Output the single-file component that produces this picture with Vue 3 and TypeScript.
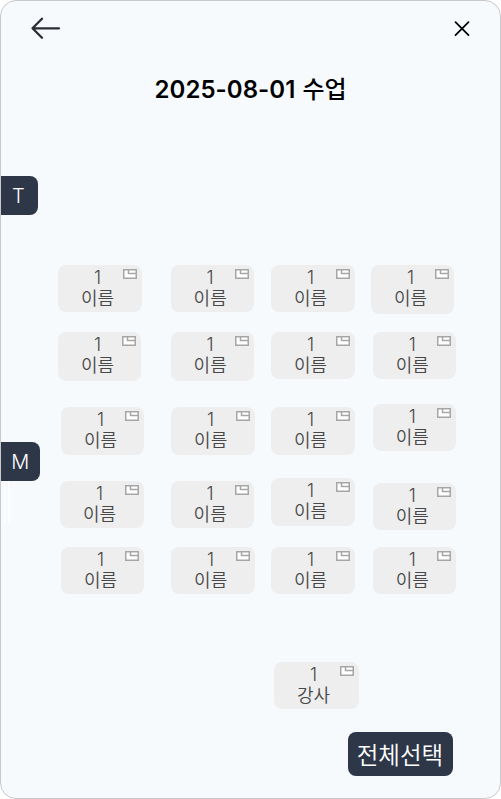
<script setup lang="ts">
interface Seat {
  gap: number
  left: number
  width: number
  height: number
  label: number
  icon: number
}

// gap: distance from the seat above; left: distance from the column edge;
// label / icon: horizontal insets of the caption and the memo icon
const seat = (gap: number, left: number, width: number, height: number, label: number, icon: number): Seat => ({
  gap, left, width, height, label, icon,
})

const columns: Seat[][] = [
  [
    seat(0, 0, 84, 47, 23, 65),
    seat(20, 0, 83, 49, 23, 64),
    seat(26, 3, 83, 47.5, 23, 64),
    seat(26, 1.5, 84.5, 47, 23.5, 65.5),
    seat(19, 3, 83, 47, 23, 64),
  ],
  [
    seat(0, 0, 83, 47, 23, 64.5),
    seat(20, 0, 83, 49, 23, 64.5),
    seat(26, 0, 84.5, 47.5, 23.5, 65.5),
    seat(26, 0, 83, 47, 23, 64.5),
    seat(19, 0, 84.5, 47, 23.5, 65.5),
  ],
  [
    seat(0, 0, 84.3, 47, 23, 65.3),
    seat(20, 0, 84.3, 47, 23, 65.3),
    seat(28, 0, 84.3, 47.5, 23, 65.3),
    seat(23, 0, 84.3, 48, 23, 65.3),
    seat(21, 0, 84.3, 47, 23, 65.3),
  ],
  [
    seat(0, 0, 83, 48.5, 23, 64.5),
    seat(18.5, 1.7, 83, 47, 23, 64.3),
    seat(25, 1.7, 83, 47, 23, 64.3),
    seat(31.7, 1.7, 83, 47, 23, 64.3),
    seat(17.3, 1.7, 83, 47, 23, 64.3),
  ],
]

const seatStyle = (s: Seat) => ({
  marginTop: `${s.gap}px`,
  marginLeft: `${s.left}px`,
  width: `${s.width}px`,
  height: `${s.height}px`,
  paddingLeft: `${s.label}px`,
})
const memoStyle = (s: Seat) => ({ left: `${s.icon}px` })
</script>

<template>
  <main class="screen">
    <header class="bar">
      <button class="icon-button" aria-label="뒤로">
        <svg width="31" height="24" viewBox="0 0 31 24">
          <path d="M29 12.3H2.5M12 2.8L2.5 12.3l9.5 9.5" fill="none" stroke="#2b2e34" stroke-width="2.3" stroke-linecap="round" stroke-linejoin="round" />
        </svg>
      </button>
      <button class="icon-button" aria-label="닫기">
        <svg width="16" height="16" viewBox="0 0 16 16">
          <path d="M1.5 2.1l13 13M14.5 2.1l-13 13" fill="none" stroke="#000" stroke-width="1.7" stroke-linecap="round" />
        </svg>
      </button>
    </header>
    <h1 class="title">2025-08-01 <span class="title-word">수업</span></h1>

    <div class="room">
      <aside class="side">
        <div class="tab tab-t">T</div>
        <div class="tab tab-m">M</div>
        <div class="rail"></div>
      </aside>
      <div v-for="(column, c) in columns" :key="c" class="column">
        <div v-for="(s, r) in column" :key="r" class="seat" :style="seatStyle(s)">
          <span class="number">1</span>
          <span class="name">이름</span>
          <svg class="memo" :style="memoStyle(s)" width="14" height="10" viewBox="0 0 14 10">
            <path d="M.75.75h12.5v8.5H.75z" fill="#fff" stroke="#a6a6a6" stroke-width="1.5" />
            <path d="M5.5 1v3.4h8" fill="none" stroke="#a6a6a6" stroke-width="1.5" />
          </svg>
        </div>
      </div>
    </div>

    <div class="seat teacher">
      <span class="number">1</span>
      <span class="name">강사</span>
      <svg class="memo" width="14" height="10" viewBox="0 0 14 10">
        <path d="M.75.75h12.5v8.5H.75z" fill="#fff" stroke="#a6a6a6" stroke-width="1.5" />
        <path d="M5.5 1v3.4h8" fill="none" stroke="#a6a6a6" stroke-width="1.5" />
      </svg>
    </div>
    <button class="select-all">전체선택</button>
  </main>
</template>

<style>
body {
  background: #fff;
}
</style>

<style scoped>
.screen {
  box-sizing: border-box;
  display: flex;
  flex-direction: column;
  width: 501px;
  height: 799px;
  overflow: hidden;
  border: 1px solid #c9c9c9;
  border-radius: 16px;
  background: #f6fafd;
  font-family: Inter, "Noto Sans CJK KR", sans-serif;
}
.bar {
  display: flex;
  justify-content: space-between;
  align-items: center;
  height: 24px;
  padding: 15px 30.5px 0 29px;
}
.icon-button {
  display: flex;
  padding: 0;
  border: 0;
  background: none;
}
.title {
  margin: 34px 0 0;
  height: 32px;
  line-height: 32px;
  padding-left: 153.5px;
  font-size: 24px;
  font-weight: 600;
  letter-spacing: 0.05px;
  word-spacing: 1px;
  white-space: nowrap;
  color: #000;
}
.title-word {
  font-weight: 500;
}
.room {
  box-sizing: border-box;
  flex: none;
  display: grid;
  grid-template-columns: 57px 112.6px 100.4px 100px 1fr;
  height: 556px;
  padding-top: 70px;
}
.side {
  display: flex;
  flex-direction: column;
}
.tab {
  display: flex;
  flex: none;
  align-items: center;
  justify-content: center;
  box-sizing: border-box;
  height: 39px;
  border-radius: 0 8px 8px 0;
  background: #2d3748;
  color: #fff;
  font-size: 20px;
  font-weight: 350;
}
.tab-t {
  width: 36.7px;
  padding: 1px 2px 0 0;
}
.tab-m {
  width: 38.7px;
  margin-top: 227px;
}
.rail {
  width: 2px;
  height: 43px;
  margin-left: 3px;
  border: solid #fbfdfe;
  border-width: 0 2px;
}
.column {
  padding-top: 89px;
}
.seat {
  position: relative;
  box-sizing: border-box;
  display: flex;
  flex-direction: column;
  align-items: flex-start;
  flex: none;
  padding-top: 1px;
  border-radius: 8px;
  background: #eee;
  color: #484848;
  font-size: 18px;
  font-weight: 350;
}
.number {
  height: 22px;
  line-height: 23px;
  margin-left: 13px;
}
.name {
  height: 22px;
  line-height: 22px;
  white-space: nowrap;
}
.memo {
  position: absolute;
  top: 4px;
}
.teacher {
  width: 84.5px;
  height: 47px;
  margin: 0 0 0 273px;
  padding-left: 23px;
}
.teacher .memo {
  left: 65.5px;
}
.select-all {
  flex: none;
  align-self: flex-end;
  width: 105px;
  height: 44px;
  margin: 23px 47.5px 0 0;
  padding: 0 0 1px;
  border: 0;
  border-radius: 8px;
  background: #2d3748;
  color: #fff;
  font: 350 23.5px Inter, "Noto Sans CJK KR", sans-serif;
  white-space: nowrap;
}
</style>
